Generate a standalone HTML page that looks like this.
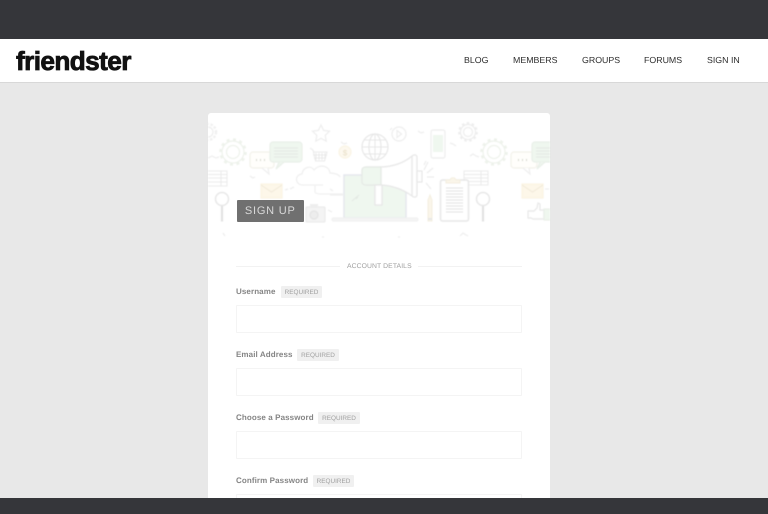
<!DOCTYPE html>
<html>
<head>
<meta charset="utf-8">
<style>
html,body{margin:0;padding:0;width:768px;height:514px;overflow:hidden;background:#e8e8e8;font-family:"Liberation Sans",sans-serif;text-rendering:geometricPrecision}
#wrap{position:absolute;left:0;top:0;width:768px;height:514px;overflow:hidden;filter:blur(.3px)}
.a{position:absolute}
#top{left:0;top:0;width:768px;height:39px;background:#35363a}
#hd{left:0;top:39px;width:768px;height:43px;background:#fff;border-bottom:1px solid #d8d8d8}
#logo{left:16px;top:46px;font-size:26.2px;line-height:30px;font-weight:bold;color:#111;letter-spacing:-.6px;-webkit-text-stroke:.8px #111;white-space:nowrap}
.n{top:55px;font-size:8.8px;line-height:11px;color:#2c2c2c;white-space:nowrap}
#card{left:208px;top:113px;width:342px;height:390px;background:#fff;border-radius:3px 3px 0 0;overflow:hidden}
#art{left:0;top:0;filter:blur(.6px);opacity:.6}
#su{left:236.500px;top:200px;width:67.500px;height:22px;background:#6c6c6c;color:#d8d8d8;font-size:11px;line-height:23px;text-align:center;letter-spacing:.8px;border-radius:1px;opacity:.97}
.l{left:236px;font-size:8px;line-height:11px;font-weight:bold;color:#858585;white-space:nowrap;letter-spacing:.1px}
.t{height:12px;background:#f0f0f0;color:#a0a0a0;font-size:6.4px;line-height:13px;text-align:center;border-radius:1px;white-space:nowrap}
.i{left:236px;width:284px;height:26px;border:1px solid #f4f4f4;background:#fff;border-radius:1px}
#ad{left:347px;font-size:6.800px;line-height:10px;color:#a0a0a0;letter-spacing:.1px;white-space:nowrap}
.r{top:266px;height:1px;background:#f2f2f2}
#bot{left:0;top:498px;width:768px;height:16px;background:#35363a}
</style>
</head>
<body>
<div id="wrap">
<div class="a" id="top"></div>
<div class="a" id="hd"></div>
<div class="a" id="logo">friendster</div>
<div class="a n" style="left:464px">BLOG</div>
<div class="a n" style="left:513px">MEMBERS</div>
<div class="a n" style="left:582px">GROUPS</div>
<div class="a n" style="left:644px">FORUMS</div>
<div class="a n" style="left:707px">SIGN IN</div>

<div class="a" id="card"></div>
<svg class="a" id="art" width="768" height="514" viewBox="0 0 768 514" fill="none" stroke="#e2e2e2" stroke-width="1.2">
<defs><clipPath id="c"><rect x="208" y="113" width="342" height="130"/></clipPath></defs>
<g clip-path="url(#c)">
<circle cx="208" cy="132" r="5" /><circle cx="208" cy="132" r="8" stroke-width="2.4" stroke-dasharray="2.4 1.6" stroke="#e6e6e6"/>
<circle cx="233" cy="152" r="6.5" stroke="#e3eadf"/><circle cx="233" cy="152" r="11" stroke="#e3eadf"/><circle cx="233" cy="152" r="12.5" stroke="#e3eadf" stroke-width="2.6" stroke-dasharray="3 3.5"/>
<circle cx="468" cy="132" r="4.5"/><circle cx="468" cy="132" r="7.5"/><circle cx="468" cy="132" r="8.8" stroke-width="2.2" stroke-dasharray="2.5 2.5"/>
<circle cx="494" cy="152" r="6.5" stroke="#e3eadf"/><circle cx="494" cy="152" r="11" stroke="#e3eadf"/><circle cx="494" cy="152" r="12.5" stroke="#e3eadf" stroke-width="2.6" stroke-dasharray="3 3.5"/>
<path d="M208 158l4-2 4 2 3-1M250 176l3 2 2-1M288 153l3-2 3 2M290 189l4-2M330 189l3 2M341 142l3 2 3-1M390 130l2-2M418 131l3 2 3-1M450 143l3 1 3 2M470 156l3-2 3 2 3 1M460 236l3-3 3 2 2 1M225 236l-2-3M322 237h2M398 237h2"/>
<rect x="250" y="152" width="24" height="16" rx="3" fill="#fffef9" stroke="#ebe9dc"/>
<path d="M262 168l7 6-1-6" fill="#fff" stroke="#e4e4e4"/>
<path d="M256 160h1M260 160h1M264 160h1" stroke="#bdbdb0" stroke-width="2"/>
<rect x="511" y="152" width="26" height="16" rx="3" fill="#fffef9" stroke="#ebe9dc"/>
<path d="M523 168l7 6-1-6" fill="#fff" stroke="#e4e4e4"/>
<path d="M518 160h1M522 160h1M526 160h1" stroke="#bdbdb0" stroke-width="2"/>
<rect x="270" y="142" width="32" height="20" rx="3" fill="#e6f2e6" stroke="#dbe5da"/>
<path d="M279 162l-3 7 8-7" fill="#e6f2e6" stroke="#dbe5da"/>
<path d="M274 148h24M274 151h24M274 154h24M274 157h24" stroke="#d3dcd2" stroke-width="1"/>
<rect x="532" y="142" width="30" height="20" rx="3" fill="#e6f2e6" stroke="#dbe5da"/>
<path d="M540 162l-3 7 8-7" fill="#e6f2e6" stroke="#dbe5da"/>
<path d="M536 148h20M536 151h20M536 154h20M536 157h20" stroke="#d3dcd2" stroke-width="1"/>
<path d="M321 125l2.6 5.4 5.9.8-4.3 4.100 1 5.900-5.200-2.800-5.200 2.800 1-5.900-4.300-4.100 5.900-.8z"/>
<path d="M310 148l3 2 2.500 11h9l2.500-9h-14M316 153v7M319 153v7M322 153v7M325 153v7M313 155h14M314 158h12" stroke="#dcdcdc" stroke-width="1"/>
<circle cx="345" cy="152" r="6" fill="#fcf5e5" stroke="#f6ecd2"/>
<text x="345" y="155.500" font-family="Liberation Sans" font-size="8" fill="#d8c8a0" stroke="none" text-anchor="middle">$</text>
<circle cx="375" cy="147" r="13" stroke="#d8d8d8"/><ellipse cx="375" cy="147" rx="6" ry="13" stroke="#d8d8d8"/>
<path d="M375 134v26M362 147h26M364 140h22M364 154h22" stroke="#d8d8d8" stroke-width="1"/>
<circle cx="399" cy="134" r="7"/><path d="M397 130.500l4.500 3.500-4.500 3.500z"/>
<rect x="431" y="130" width="14" height="28" rx="2" fill="#fff"/><rect x="433" y="135" width="10" height="17" fill="#e6f2e6" stroke="none"/>
<path d="M208 171h19v15h-19M208 174.500h19M208 178h19M208 182h19M221 171v15" stroke="#dedede" stroke-width="1"/>
<path d="M464 171h24v14h-24zM464 174.500h24M464 178h24M464 181.500h24M481 171v14" stroke="#dedede" stroke-width="1"/>
<circle cx="222" cy="199" r="6.500" stroke="#d8d8d8" stroke-width="1.500"/><path d="M222 206v15.500" stroke="#cfcfcf" stroke-width="2.200"/>
<circle cx="483" cy="199" r="6.500" stroke="#d8d8d8" stroke-width="1.500"/><path d="M483 206v15.500" stroke="#cfcfcf" stroke-width="2.200"/>
<rect x="261" y="184" width="21" height="14" fill="#fcf2dc" stroke="#f8ecd0"/><path d="M261 185l10.500 7 10.500-7" stroke="#e8dcc0" stroke-width="1"/>
<rect x="522" y="184" width="21" height="14" fill="#fcf2dc" stroke="#f8ecd0"/><path d="M522 185l10.500 7 10.500-7" stroke="#e8dcc0" stroke-width="1"/>
<path d="M285 190l3-1M545 189h4"/>
<path d="M303 185c-8 0-9-10-1-11 1-7 9-9 12-4 5-6 15-5 16 3 3 0 9 1 10 4" stroke="#e4e4e4"/>
<path d="M303 185h20M315 185v7c0 1 3 2 5 2h23" stroke="#e6e6e6"/>
<rect x="306" y="207" width="19" height="15" rx="1" fill="#ededed" stroke="#dedede"/><rect x="310" y="204" width="8" height="3" fill="#e4e4e4" stroke="none"/><circle cx="314" cy="215" r="4" fill="#e2e2e2" stroke="#d2d2d2"/>
<path d="M328 210l4 2" />
<path d="M344 218v-43h62v43z" fill="#e6f2e6" stroke="#d4d8e2" stroke-width="1.500"/>
<rect x="332" y="218" width="86" height="3" rx="1.500" fill="#efefef" stroke="#e8e8e8"/>
<path d="M352 201l7-6M356 199l2-2" stroke="#d2dcd2" stroke-width="1"/>
<path d="M330 195h14" stroke="#e6e6e6"/>
<path d="M362 171c0-2 2-4 4-4h14c12 0 24-4 32-11l3-1v42l-3-1c-8-6-20-11-32-11h-14c-2 0-4-2-4-4z" fill="#fff" stroke="#d8d8d8"/>
<path d="M362 170c0-2 2-3 4-3h15v18h-15c-2 0-4-1-4-3z" fill="#e6f2e6" stroke="#d4dcd4"/>
<path d="M375 185v20h7v-20z" fill="#fff" stroke="#d8d8d8"/>
<rect x="412" y="155" width="5" height="42" rx="2" fill="#fff" stroke="#d8d8d8"/>
<rect x="417" y="171" width="5" height="11" fill="#fff" stroke="#d8d8d8"/>
<path d="M424 170l4-8M427 173l6-5M427 177h7M426 183l5 6M424 165l2-4" stroke="#e0e0e0"/>
<path d="M428 200l2-5 2 5v21h-4z" fill="#f8f0dc" stroke="#ece4cc" stroke-width="1"/>
<path d="M428 219h4" stroke="#d8d8d8" stroke-width="2"/>
<rect x="440.500" y="180" width="28" height="41" rx="2" fill="#fff" stroke="#d8d8d8" stroke-width="1.500"/>
<path d="M446 183v-3h4c1-3 5-3 6 0h4v3z" fill="#f8f0dc" stroke="#ece4cc" stroke-width="1"/>
<path d="M446 188h17M446 191h17M446 194h17M446 197h17M446 200h17M446 203h17M446 206h17M446 209h17M446 212h17" stroke="#cfcfcf" stroke-width="1"/>
<path d="M528 211h6l3-3 1-5 2 1v6h4v9h-11l-2-1h-3z" fill="#fff" stroke="#d8d8d8"/>
<rect x="544" y="209" width="8" height="11" fill="#e6f2e6" stroke="#dbe5da"/>
</g>
</svg>
<div class="a" id="su">SIGN UP</div>

<div class="a r" style="left:236px;width:104px"></div>
<div class="a" id="ad" style="top:262px">ACCOUNT DETAILS</div>
<div class="a r" style="left:418px;width:104px"></div>

<div class="a l" style="top:286px">Username</div>
<div class="a t" style="left:281px;top:286px;width:41px">REQUIRED</div>
<div class="a i" style="top:305px"></div>

<div class="a l" style="top:349px">Email Address</div>
<div class="a t" style="left:297px;top:349px;width:42px">REQUIRED</div>
<div class="a i" style="top:368px"></div>

<div class="a l" style="top:412px">Choose a Password</div>
<div class="a t" style="left:318px;top:412px;width:42px">REQUIRED</div>
<div class="a i" style="top:431px"></div>

<div class="a l" style="top:475px">Confirm Password</div>
<div class="a t" style="left:313px;top:475px;width:41px">REQUIRED</div>
<div class="a i" style="top:494px"></div>

<div class="a" id="bot"></div>
</div>
</body>
</html>
